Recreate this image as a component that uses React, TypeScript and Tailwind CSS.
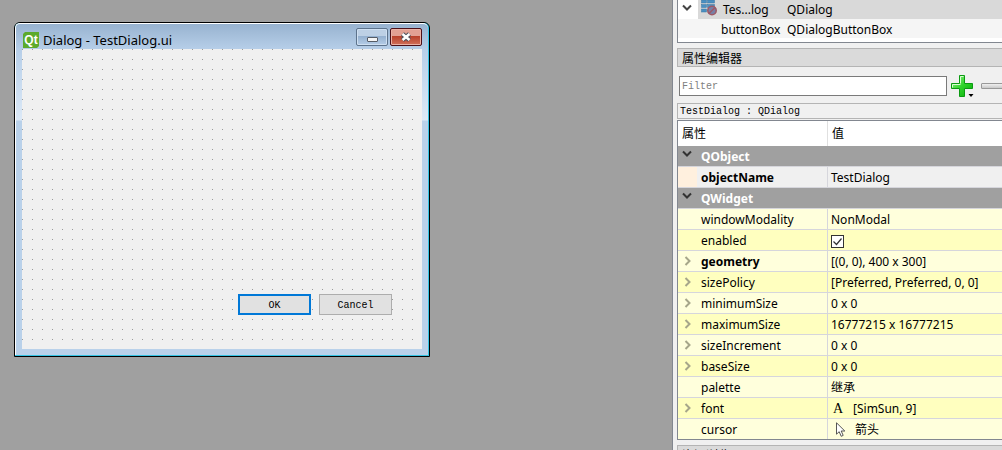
import { ReactNode, useState } from "react";
import clsx from "clsx";

type Property = {
  name: string;
  value: ReactNode;
  bold?: boolean;
  expandable?: boolean;
  dark?: boolean;
};

function ChevronDown() {
  return (
    <svg className="h-2 w-2.5" viewBox="0 0 10 8" fill="none">
      <path d="M1 1.5l4 4 4-4" stroke="currentColor" strokeWidth={2} />
    </svg>
  );
}

function ChevronRight() {
  return (
    <svg className="h-2.5 w-2" viewBox="0 0 8 10" fill="none">
      <path d="M1.5 1l4 4-4 4" stroke="#a6a68a" strokeWidth={2} />
    </svg>
  );
}

function DialogIcon() {
  return (
    <svg className="h-4 w-4" viewBox="0 0 16 16">
      <g fill="#4a90c2" stroke="#3a76a3" strokeWidth={0.5}>
        <rect x="0.5" y="0" width="5" height="3" />
        <rect x="6.5" y="0" width="7" height="3" />
        <rect x="0.5" y="4.5" width="5" height="3" />
        <rect x="6.5" y="4.5" width="7" height="3" />
        <rect x="0.5" y="9" width="5" height="3" />
      </g>
      <circle cx="11" cy="10.5" r="4.2" fill="#7680a8" stroke="#9c5a68" strokeWidth={1.6} />
      <path d="M8 13.5l6-6" stroke="#9c5a68" strokeWidth={1.6} />
    </svg>
  );
}

function PlusIcon() {
  return (
    <svg className="h-6 w-6" viewBox="0 0 24 24">
      <defs>
        <linearGradient id="plus" x1="0" y1="0" x2="1" y2="1">
          <stop offset="0" stopColor="#a9f59a" />
          <stop offset="0.5" stopColor="#2fd42b" />
          <stop offset="1" stopColor="#07a807" />
        </linearGradient>
      </defs>
      <path
        d="M9.500 1.500h5v8h8v5h-8v8h-5v-8h-8v-5h8z"
        fill="url(#plus)"
        stroke="#0b9a12"
        strokeLinejoin="round"
      />
      <path d="M10.5 9.500v-7h3M2.500 13.500v-3h8" fill="none" stroke="#d8ffd0" />
      <path d="M18.5 20h5L21 23z" fill="#000" />
    </svg>
  );
}

function MinusIcon() {
  return (
    <svg className="h-6 w-6" viewBox="0 0 24 24">
      <defs>
        <linearGradient id="minus" x1="0" y1="0" x2="0" y2="1">
          <stop offset="0" stopColor="#f4f4f4" />
          <stop offset="1" stopColor="#c4c4c4" />
        </linearGradient>
      </defs>
      <rect x="0.5" y="9.500" width="23" height="5" rx="0.5" fill="url(#minus)" stroke="#999" />
    </svg>
  );
}

function CursorIcon() {
  return (
    <svg className="h-4 w-4" viewBox="0 0 16 16">
      <path
        d="M5.500 0.8v11.4l2.700-2.500 2 4.600 2-.9-2-4.400h3.600z"
        fill="#fff"
        stroke="#444"
        strokeWidth={0.9}
      />
    </svg>
  );
}

function EnabledBox() {
  const [checked, setChecked] = useState(true);

  return (
    <span className="relative block h-[13px] w-[13px]">
      <input
        type="checkbox"
        aria-label="enabled"
        checked={checked}
        onChange={() => setChecked(!checked)}
        className="block h-[13px] w-[13px] appearance-none border border-[#333] bg-white"
      />
      {checked && (
        <svg className="pointer-events-none absolute inset-0" viewBox="0 0 13 13" fill="none">
          <path d="M2.500 6.500l3 3 5-6" stroke="#333" strokeWidth={1.2} />
        </svg>
      )}
    </span>
  );
}

const objectProps: Property[] = [
  { name: "objectName", value: "TestDialog", bold: true },
];

const widgetProps: Property[] = [
  { name: "windowModality", value: "NonModal" },
  { name: "enabled", value: <EnabledBox />, dark: true },
  { name: "geometry", value: "[(0, 0), 400 x 300]", bold: true, expandable: true },
  { name: "sizePolicy", value: "[Preferred, Preferred, 0, 0]", expandable: true, dark: true },
  { name: "minimumSize", value: "0 x 0", expandable: true },
  { name: "maximumSize", value: "16777215 x 16777215", expandable: true, dark: true },
  { name: "sizeIncrement", value: "0 x 0", expandable: true },
  { name: "baseSize", value: "0 x 0", expandable: true, dark: true },
  { name: "palette", value: "继承" },
  {
    name: "font",
    value: (
      <span className="flex items-center">
        <span className="w-[22px] pl-0.5 font-['Liberation_Serif'] text-sm leading-4">A</span>
        [SimSun, 9]
      </span>
    ),
    expandable: true,
    dark: true,
  },
  {
    name: "cursor",
    value: (
      <span className="flex items-center gap-2">
        <CursorIcon />
        箭头
      </span>
    ),
  },
];

function GroupRow({ title }: { title: string }) {
  return (
    <tr className="h-[21px] bg-[#a0a0a0]">
      <th colSpan={2} className="border-b border-[#d6d6dc] p-0 text-left font-bold text-white">
        <div className="flex h-5 items-center">
          <span className="flex h-5 w-[23px] items-start pt-1 pl-1 text-[#333]">
            <ChevronDown />
          </span>
          <span className="pt-0.5">{title}</span>
        </div>
      </th>
    </tr>
  );
}

function PropertyRow({ item, plain }: { item: Property; plain?: boolean }) {
  return (
    <tr
      className={clsx(
        "h-[21px]",
        plain ? "bg-[#f0f0f0]" : item.dark ? "bg-[#ffffbf]" : "bg-[#ffffdc]"
      )}
    >
      <th
        className={clsx(
          "border-r border-b border-[#d6d6dc] p-0 text-left",
          item.bold ? "font-bold" : "font-normal"
        )}
      >
        <div className="flex h-5 items-center">
          <span
            className={clsx(
              "mr-1 flex h-5 w-[19px] items-center pl-1.5",
              plain && "bg-[#fff0de]"
            )}
          >
            {item.expandable && <ChevronRight />}
          </span>
          <span className="pt-0.5">{item.name}</span>
        </div>
      </th>
      <td className="border-b border-[#d6d6dc] pt-0.5 pr-0 pb-0 pl-[3px]">{item.value}</td>
    </tr>
  );
}

function DockTitle({ children }: { children: ReactNode }) {
  return (
    <h2 className="h-[19px] shrink-0 border border-r-0 border-[#b4b4b4] bg-[#dadada] pl-1 text-xs leading-5">
      {children}
    </h2>
  );
}

function FormWindow() {
  return (
    <section className="w-[416px] rounded-t-md border border-black bg-[#35c4e4]">
      <div className="mr-px mb-px rounded-t-[5px] border-t border-l border-white bg-[linear-gradient(#98b3d0_0px,#b7cfe9_26px,#dce9f7_96px,#b9d1ea_97px)] px-1.5 pb-1.5">
        <header className="flex h-[25px] items-start justify-between">
          <h1 className="flex items-center gap-1 pt-2 pl-px text-[13px] leading-4">
            <svg className="h-4 w-4" viewBox="0 0 16 16">
              <path d="M2 0h14v14l-2 2H0V2z" fill="#5caa2c" />
              <text
                x="8"
                y="12"
                textAnchor="middle"
                fill="#fff"
                fontSize="12"
                fontWeight="bold"
                fontFamily="Liberation Sans Narrow, Liberation Sans, sans-serif"
              >
                Qt
              </text>
            </svg>
            Dialog - TestDialog.ui
          </h1>
          <div className="flex gap-0.5 pt-1">
            <button
              aria-label="Minimize"
              className="flex h-[18px] w-8 items-center justify-center rounded-xs border border-[#5d738c] bg-[linear-gradient(#bdd0e5_45%,#94b0cf_45%,#b5cde7)] pt-1 shadow-[inset_0_0_0_1px_#cfe0f2]"
            >
              <svg className="h-[5px] w-[11px]" viewBox="0 0 11 5">
                <rect x="0.5" y="0.5" width="10" height="4" rx="0.5" fill="#f5f5f5" stroke="#555c66" />
              </svg>
            </button>
            <button
              aria-label="Close"
              className="flex h-[18px] w-8 items-center justify-center rounded-xs border border-[#4c1018] bg-[linear-gradient(#e2a093_45%,#b8402a_45%,#d0705a)] shadow-[inset_0_0_0_1px_#eab0a4]"
            >
              <svg className="h-2.5 w-3" viewBox="0 0 12 10">
                <path d="M2.500 2l7 6M9.500 2l-7 6" stroke="#4a4f5c" strokeWidth={4.500} />
                <path d="M2.500 2l7 6M9.500 2l-7 6" stroke="#fff" strokeWidth={2.500} />
              </svg>
            </button>
          </div>
        </header>
        <div className="flex h-[300px] items-end justify-end gap-2 bg-[#f0f0f0] bg-[linear-gradient(90deg,transparent_1px,#f0f0f0_1px),linear-gradient(#999_1px,#f0f0f0_1px)] bg-[size:10px_10px] pr-[30px] pb-[34px] font-['Liberation_Mono',monospace] text-[10px]">
          <button className="h-[21px] w-[73px] border-2 border-[#0078d7] bg-[#e1e1e1] pt-0.5">
            OK
          </button>
          <button className="h-[21px] w-[73px] border border-[#adadad] bg-[#e1e1e1] pt-0.5">
            Cancel
          </button>
        </div>
      </div>
    </section>
  );
}

function ObjectTree() {
  return (
    <ul className="h-[43px] shrink-0 border-b border-l border-[#828790] bg-white">
      <li className="flex h-[19px] items-center">
        <span className="flex h-full w-5 items-start pt-1 pl-1 text-[#444]">
          <ChevronDown />
        </span>
        <span className="flex h-full flex-1 items-center bg-[#d9d9d9] pl-[3px]">
          <span className="flex h-full items-start">
            <DialogIcon />
          </span>
          <span className="w-[70px] pl-[6px]">Tes...log</span>
          QDialog
        </span>
      </li>
      <li className="flex h-[19px] items-center bg-[#f5f5f5] pt-0.5 pl-[43px]">
        <span className="w-[66px]">buttonBox</span>
        QDialogButtonBox
      </li>
    </ul>
  );
}

export default function App() {
  const [filter, setFilter] = useState("");

  return (
    <main className="flex h-screen overflow-hidden bg-[#a0a0a0] font-['Noto_Sans','Noto_Sans_CJK_SC',sans-serif] text-xs text-black">
      <div className="min-w-0 flex-1 pt-[22px] pl-3.5">
        <FormWindow />
      </div>

      <aside className="flex w-[330px] shrink-0 flex-col overflow-hidden border-l border-[#828790] bg-[#f0f0f0] pl-1">
        <ObjectTree />

        <div className="flex shrink-0 flex-col pt-[5px]">
          <DockTitle>属性编辑器</DockTitle>
          <div className="flex h-9 items-center pt-0.5 pl-0.5">
            <input
              type="text"
              aria-label="Filter"
              placeholder="Filter"
              value={filter}
              onChange={(e) => setFilter(e.target.value)}
              className="h-5 min-w-0 flex-1 border border-[#7a7a7a] bg-white px-0.5 font-['Liberation_Mono',monospace] text-[10px] placeholder:text-[#808080]"
            />
            <button aria-label="Add dynamic property" className="ml-[3px]">
              <PlusIcon />
            </button>
            <button aria-label="Remove dynamic property" className="ml-[7px] w-[21px] overflow-hidden">
              <MinusIcon />
            </button>
          </div>
          <p className="h-4 border border-r-0 border-[#b4b4b4] pl-0.5 font-['Liberation_Mono',monospace] text-[10px] leading-4">
            TestDialog : QDialog
          </p>

          {/* Property grid */}
          <div className="mt-px h-80 overflow-hidden border border-r-0 border-[#828790] bg-white">
            <table className="w-full table-fixed border-separate border-spacing-0 leading-4">
              <colgroup>
                <col className="w-[150px]" />
                <col />
              </colgroup>
              <thead>
                <tr className="h-[25px]">
                  <th className="border-r border-[#e0e0e0] py-0 pl-1 text-left font-normal">属性</th>
                  <th className="py-0 pl-1 text-left font-normal">值</th>
                </tr>
              </thead>
              <tbody>
                <GroupRow title="QObject" />
                {objectProps.map((item) => (
                  <PropertyRow key={item.name} item={item} plain />
                ))}
                <GroupRow title="QWidget" />
                {widgetProps.map((item) => (
                  <PropertyRow key={item.name} item={item} />
                ))}
              </tbody>
            </table>
          </div>
        </div>

        <div className="shrink-0 pt-[5px]">
          <DockTitle>资源浏览器</DockTitle>
        </div>
      </aside>
    </main>
  );
}
